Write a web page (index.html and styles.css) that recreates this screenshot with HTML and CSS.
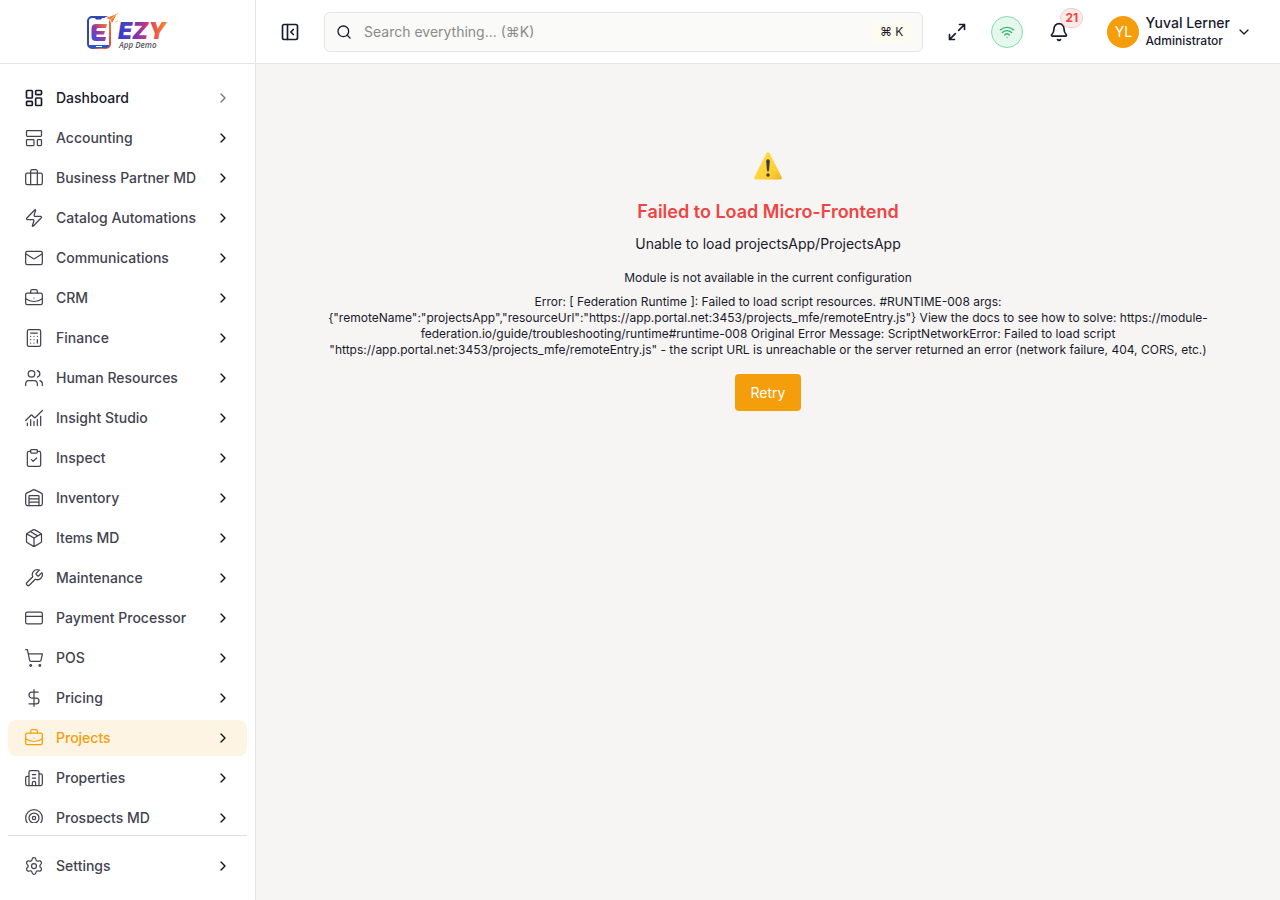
FILE: index.html
```html
<!DOCTYPE html>
<html lang="en">
  <head>
    <meta charset="utf-8" />
    <meta name="viewport" content="width=device-width, initial-scale=1.0" />
    <title>EZY App Demo</title>
    <link rel="stylesheet" href="styles.css">
  </head>
  <body>
    <!-- icon shapes shared by the menu -->
    <svg class="sprite" aria-hidden="true">
      <symbol id="chevron" viewBox="0 0 24 24"><path d="m9 18 6-6-6-6" /></symbol>
      <symbol id="briefcase" viewBox="0 0 24 24">
        <path d="M12 12h.01M16 6V4a2 2 0 0 0-2-2h-4a2 2 0 0 0-2 2v2M22 13a18.15 18.15 0 0 1-20 0" />
        <rect width="20" height="14" x="2" y="6" rx="2" />
      </symbol>
    </svg>

    <div class="wrap">
      <aside class="sidebar">
        <a class="logo" href="#home" aria-label="EZY App Demo">
          <svg width="84" height="40" viewBox="0 0 84 40">
            <defs>
              <linearGradient id="phone" x1="0" y1="0.2" x2="1" y2="0.8">
                <stop offset="0" stop-color="#2547b8" />
                <stop offset="0.45" stop-color="#4b45b5" />
                <stop offset="0.8" stop-color="#f4713a" />
                <stop offset="1" stop-color="#e2483f" />
              </linearGradient>
              <linearGradient id="letter" x1="0" y1="1" x2="1" y2="0">
                <stop offset="0" stop-color="#2458e0" />
                <stop offset="0.5" stop-color="#9a35a8" />
                <stop offset="1" stop-color="#ff7a2a" />
              </linearGradient>
              <linearGradient id="word" x1="0" y1="0" x2="1" y2="0">
                <stop offset="0" stop-color="#2c45c9" />
                <stop offset="0.35" stop-color="#7634b4" />
                <stop offset="0.6" stop-color="#d93a6c" />
                <stop offset="1" stop-color="#ff9418" />
              </linearGradient>
            </defs>
            <rect x="2" y="5" width="22" height="31" rx="4" fill="#fff" stroke="url(#phone)" stroke-width="2" />
            <path d="M8 5h9l-2 2.500h-5z" fill="#2547b8" />
            <path d="M3 33h20v0q0 3-3 3H6q-3 0-3-3z" fill="#2c55c4" />
            <path d="M10 34.500h6" stroke="#fff" stroke-width="1" />
            <path d="M10 12h11l-1 4h-8q-1.500 0-1.500 1.500V19H19l-1 3.500h-7.500V25H20l-1 4h-9q-4.500 0-4.500-4.500v-8Q5.500 12 10 12z" fill="url(#letter)" />
            <path d="M19 6l13-5-6 11-2-4z" fill="#f47a2c" stroke="#fff" stroke-width="1" />
            <path d="M24 8l8-7M29 10l3-1" stroke="#fbc08c" stroke-width="1" />
            <text class="logo-name" x="32" y="27" fill="url(#word)">EZY</text>
            <text class="logo-sub" x="33" y="36">App Demo</text>
          </svg>
        </a>
        <nav class="menu">
          <ul class="nav-items">
            <li><a class="home" href="#dashboard">
              <svg class="icon" viewBox="0 0 24 24"><rect width="7" height="9" x="3" y="3" rx="1" /><rect width="7" height="5" x="14" y="3" rx="1" /><rect width="7" height="9" x="14" y="12" rx="1" /><rect width="7" height="5" x="3" y="16" rx="1" /></svg>
              <span>Dashboard</span><svg class="chevron"><use href="#chevron" /></svg></a></li>
            <li><a href="#accounting">
              <svg class="icon" viewBox="0 0 24 24"><rect width="18" height="7" x="3" y="3" rx="1" /><rect width="9" height="7" x="3" y="14" rx="1" /><rect width="5" height="7" x="16" y="14" rx="1" /></svg>
              <span>Accounting</span><svg class="chevron"><use href="#chevron" /></svg></a></li>
            <li><a href="#business-partner">
              <svg class="icon" viewBox="0 0 24 24"><path d="M16 20V4a2 2 0 0 0-2-2h-4a2 2 0 0 0-2 2v16" /><rect width="20" height="14" x="2" y="6" rx="2" /></svg>
              <span>Business Partner MD</span><svg class="chevron"><use href="#chevron" /></svg></a></li>
            <li><a href="#catalog">
              <svg class="icon" viewBox="0 0 24 24"><path d="M4 14a1 1 0 0 1-.78-1.63l9.9-10.2a.5.5 0 0 1 .86.46l-1.92 6.02A1 1 0 0 0 13 10h7a1 1 0 0 1 .78 1.63l-9.9 10.2a.5.5 0 0 1-.86-.46l1.92-6.02A1 1 0 0 0 11 14z" /></svg>
              <span>Catalog Automations</span><svg class="chevron"><use href="#chevron" /></svg></a></li>
            <li><a href="#communications">
              <svg class="icon" viewBox="0 0 24 24"><rect width="20" height="16" x="2" y="4" rx="2" /><path d="m22 7-8.97 5.7a1.94 1.94 0 0 1-2.06 0L2 7" /></svg>
              <span>Communications</span><svg class="chevron"><use href="#chevron" /></svg></a></li>
            <li><a href="#crm">
              <svg class="icon"><use href="#briefcase" /></svg>
              <span>CRM</span><svg class="chevron"><use href="#chevron" /></svg></a></li>
            <li><a href="#finance">
              <svg class="icon" viewBox="0 0 24 24"><rect width="16" height="20" x="4" y="2" rx="2" /><path d="M8 6h8M16 14v4M16 10h.01M12 10h.01M8 10h.01M12 14h.01M8 14h.01M12 18h.01M8 18h.01" /></svg>
              <span>Finance</span><svg class="chevron"><use href="#chevron" /></svg></a></li>
            <li><a href="#hr">
              <svg class="icon" viewBox="0 0 24 24"><path d="M16 21v-2a4 4 0 0 0-4-4H6a4 4 0 0 0-4 4v2M22 21v-2a4 4 0 0 0-3-3.87M16 3.13a4 4 0 0 1 0 7.75" /><circle cx="9" cy="7" r="4" /></svg>
              <span>Human Resources</span><svg class="chevron"><use href="#chevron" /></svg></a></li>
            <li><a href="#insight">
              <svg class="icon" viewBox="0 0 24 24"><path d="M12 16v5M16 14v7M20 10v11M4 18v3M8 14v7" /><path d="m22 3-8.646 8.646a.5.5 0 0 1-.708 0L9.354 8.354a.5.5 0 0 0-.707 0L2 15" /></svg>
              <span>Insight Studio</span><svg class="chevron"><use href="#chevron" /></svg></a></li>
            <li><a href="#inspect">
              <svg class="icon" viewBox="0 0 24 24"><rect width="8" height="4" x="8" y="2" rx="1" /><path d="M16 4h2a2 2 0 0 1 2 2v14a2 2 0 0 1-2 2H6a2 2 0 0 1-2-2V6a2 2 0 0 1 2-2h2M9 14l2 2 4-4" /></svg>
              <span>Inspect</span><svg class="chevron"><use href="#chevron" /></svg></a></li>
            <li><a href="#inventory">
              <svg class="icon" viewBox="0 0 24 24"><path d="M18 21V10a1 1 0 0 0-1-1H7a1 1 0 0 0-1 1v11M6 13h12M6 17h12" /><path d="M22 19a2 2 0 0 1-2 2H4a2 2 0 0 1-2-2V8a2 2 0 0 1 1.132-1.803l7.95-3.974a2 2 0 0 1 1.837 0l7.948 3.974A2 2 0 0 1 22 8z" /></svg>
              <span>Inventory</span><svg class="chevron"><use href="#chevron" /></svg></a></li>
            <li><a href="#items">
              <svg class="icon" viewBox="0 0 24 24"><path d="M11 21.73a2 2 0 0 0 2 0l7-4A2 2 0 0 0 21 16V8a2 2 0 0 0-1-1.73l-7-4a2 2 0 0 0-2 0l-7 4A2 2 0 0 0 3 8v8a2 2 0 0 0 1 1.73zM12 22V12" /><path d="M3.29 7 12 12l8.71-5M7.5 4.27l9 5.15" /></svg>
              <span>Items MD</span><svg class="chevron"><use href="#chevron" /></svg></a></li>
            <li><a href="#maintenance">
              <svg class="icon" viewBox="0 0 24 24"><path d="M14.7 6.3a1 1 0 0 0 0 1.4l1.6 1.6a1 1 0 0 0 1.4 0l3.77-3.77a6 6 0 0 1-7.94 7.94l-6.91 6.91a2.12 2.12 0 0 1-3-3l6.91-6.91a6 6 0 0 1 7.94-7.94l-3.76 3.76z" /></svg>
              <span>Maintenance</span><svg class="chevron"><use href="#chevron" /></svg></a></li>
            <li><a href="#payment">
              <svg class="icon" viewBox="0 0 24 24"><rect width="20" height="14" x="2" y="5" rx="2" /><path d="M2 10h20" /></svg>
              <span>Payment Processor</span><svg class="chevron"><use href="#chevron" /></svg></a></li>
            <li><a href="#pos">
              <svg class="icon" viewBox="0 0 24 24"><circle cx="8" cy="21" r="1" /><circle cx="19" cy="21" r="1" /><path d="M2.05 2.05h2l2.66 12.42a2 2 0 0 0 2 1.58h9.78a2 2 0 0 0 1.95-1.57l1.65-7.43H5.12" /></svg>
              <span>POS</span><svg class="chevron"><use href="#chevron" /></svg></a></li>
            <li><a href="#pricing">
              <svg class="icon" viewBox="0 0 24 24"><path d="M12 2v20M17 5H9.5a3.5 3.5 0 0 0 0 7h5a3.5 3.5 0 0 1 0 7H6" /></svg>
              <span>Pricing</span><svg class="chevron"><use href="#chevron" /></svg></a></li>
            <li><a class="active" href="#projects">
              <svg class="icon"><use href="#briefcase" /></svg>
              <span>Projects</span><svg class="chevron"><use href="#chevron" /></svg></a></li>
            <li><a href="#properties">
              <svg class="icon" viewBox="0 0 24 24"><path d="M10 12h4M10 8h4M14 21v-3a2 2 0 0 0-4 0v3M6 10H4a2 2 0 0 0-2 2v7a2 2 0 0 0 2 2h16a2 2 0 0 0 2-2V9a2 2 0 0 0-2-2h-2M6 21V5a2 2 0 0 1 2-2h8a2 2 0 0 1 2 2v16" /></svg>
              <span>Properties</span><svg class="chevron"><use href="#chevron" /></svg></a></li>
            <li><a href="#prospects">
              <svg class="icon" viewBox="0 0 24 24"><circle cx="12" cy="12" r="10" /><circle cx="12" cy="12" r="6" /><circle cx="12" cy="12" r="2" /></svg>
              <span>Prospects MD</span><svg class="chevron"><use href="#chevron" /></svg></a></li>
          </ul>
        </nav>
        <div class="nav-items nav-bottom">
          <a href="#settings">
            <svg class="icon" viewBox="0 0 24 24"><path d="M9.671 4.136a2.34 2.34 0 0 1 4.659 0 2.34 2.34 0 0 0 3.319 1.915 2.34 2.34 0 0 1 2.33 4.033 2.34 2.34 0 0 0 0 3.831 2.34 2.34 0 0 1-2.33 4.033 2.34 2.34 0 0 0-3.319 1.915 2.34 2.34 0 0 1-4.659 0 2.34 2.34 0 0 0-3.32-1.915 2.34 2.34 0 0 1-2.33-4.033 2.34 2.34 0 0 0 0-3.831A2.34 2.34 0 0 1 6.35 6.051a2.34 2.34 0 0 0 3.319-1.915" /><circle cx="12" cy="12" r="3" /></svg>
            <span>Settings</span><svg class="chevron"><use href="#chevron" /></svg></a>
        </div>
      </aside>

      <div class="page">
        <header class="topbar">
          <button class="icon-btn" type="button" aria-label="Collapse sidebar">
            <svg class="icon" viewBox="0 0 24 24"><rect width="18" height="18" x="3" y="3" rx="2" /><path d="M9 3v18M16 15l-3-3 3-3" /></svg>
          </button>
          <label class="search">
            <svg class="icon small" viewBox="0 0 24 24"><circle cx="11" cy="11" r="8" /><path d="m21 21-4.3-4.3" /></svg>
            <input type="search" aria-label="Search everything" placeholder="Search everything... (⌘K)" />
            <kbd>⌘ K</kbd>
          </label>
          <button class="icon-btn" type="button" aria-label="Full screen">
            <svg class="icon" viewBox="0 0 24 24"><path d="M15 3h6v6M21 3l-7 7M3 21l7-7M9 21H3v-6" /></svg>
          </button>
          <button class="icon-btn wifi" type="button" aria-label="Online">
            <svg class="icon small" viewBox="0 0 24 24"><path d="M12 20h.01M2 8.82a15 15 0 0 1 20 0M5 12.859a10 10 0 0 1 14 0M8.5 16.429a5 5 0 0 1 7 0" /></svg>
          </button>
          <button class="icon-btn bell" type="button" aria-label="Notifications">
            <svg class="icon" viewBox="0 0 24 24"><path d="M10.268 21a2 2 0 0 0 3.464 0M3.262 15.326A1 1 0 0 0 4 17h16a1 1 0 0 0 .74-1.673C19.41 13.956 18 12.499 18 8A6 6 0 0 0 6 8c0 4.499-1.411 5.956-2.738 7.326" /></svg>
            <span class="badge">21</span>
          </button>
          <button class="user" type="button">
            <span class="avatar">YL</span>
            <span class="user-text">
              <span class="user-name">Yuval Lerner</span>
              <span class="user-role">Administrator</span>
            </span>
            <svg class="icon small" viewBox="0 0 24 24"><path d="m6 9 6 6 6-6" /></svg>
          </button>
        </header>

        <main class="error">
          <svg class="warning" viewBox="0 0 28 28" role="img" aria-label="Warning">
            <defs>
              <linearGradient id="sign" x1="0" y1="0" x2="1" y2="1">
                <stop offset="0" stop-color="#ffdf4a" />
                <stop offset="0.7" stop-color="#fdd033" />
                <stop offset="1" stop-color="#f0b020" />
              </linearGradient>
            </defs>
            <path d="M12.4 1.3q1.6-2 3.2 0L27.6 25q.8 2.2-1.4 2.4H1.8Q-.4 27.2.4 25z" fill="url(#sign)" />
            <path d="M12.2 9.2q0-2 1.8-2t1.8 2l-.8 9.3q-.2 1.1-1 1.1t-1-1.1z" fill="#3b3c42" />
            <circle cx="14" cy="23" r="1.7" fill="#3b3c42" />
          </svg>
          <h1>Failed to Load Micro-Frontend</h1>
          <p class="lead">Unable to load projectsApp/ProjectsApp</p>
          <p>Module is not available in the current configuration</p>
          <p class="details">Error: [ Federation Runtime ]: Failed to load script resources. #RUNTIME-008 args: {"remoteName":"projectsApp","resourceUrl":"https://app.portal.net:3453/projects_mfe/remoteEntry.js"} View the docs to see how to solve: https://module-federation.io/guide/troubleshooting/runtime#runtime-008 Original Error Message: ScriptNetworkError: Failed to load script "https://app.portal.net:3453/projects_mfe/remoteEntry.js" - the script URL is unreachable or the server returned an error (network failure, 404, CORS, etc.)</p>
          <button class="retry" type="button">Retry</button>
        </main>
      </div>
    </div>
  </body>
</html>
```
FILE: styles.css
```css
/* Simple Reset CSS */
* {
  margin: 0;
  padding: 0;
  box-sizing: border-box;
}

html,
body {
  height: 100%;
}

body {
  font-family: Inter, 'Liberation Sans', sans-serif;
  font-size: 14px;
  line-height: 20px;
  color: #1a1a2e;
  background-color: #f6f5f3;
}

ul {
  list-style: none;
}

a {
  color: inherit;
  text-decoration: none;
}

button,
input,
kbd {
  font: inherit;
  color: inherit;
  border: 0;
  background: none;
}

button {
  cursor: pointer;
}

.sprite {
  display: none;
}

.icon,
.chevron {
  flex: none;
  width: 20px;
  height: 20px;
  fill: none;
  stroke: currentColor;
  stroke-width: 2;
  stroke-linecap: round;
  stroke-linejoin: round;
}

.small,
.chevron {
  width: 16px;
  height: 16px;
}

.wrap {
  display: flex;
  height: 100%;
}

/* Sidebar */
.sidebar {
  flex: none;
  display: flex;
  flex-direction: column;
  width: 256px;
  border-right: 1px solid #e5e5e5;
  background-color: #fff;
}

.logo {
  flex: none;
  display: flex;
  align-items: center;
  justify-content: center;
  height: 64px;
  border-bottom: 1px solid #e5e5e5;
}

.logo svg {
  overflow: visible;
}

.logo-name {
  font: italic 900 23px Inter, sans-serif;
}

.logo-sub {
  font: italic 600 8px 'Open Sans', sans-serif;
  fill: #55555c;
}

.menu {
  flex: 1;
  min-height: 0;
  margin: 16px 0 12px;
  overflow-y: auto;
  scrollbar-width: none;
}

.nav-items {
  display: flex;
  flex-direction: column;
  gap: 4px;
  padding: 0 8px;
}

.nav-items a {
  display: flex;
  align-items: center;
  gap: 12px;
  height: 36px;
  padding: 0 16px;
  border-radius: 8px;
  font-weight: 500;
  color: #43434f;
}

.nav-items a:hover {
  background-color: #f6f5f3;
}

.nav-items span {
  flex: 1;
  white-space: nowrap;
}

.nav-items .icon {
  stroke-width: 1.5;
}

.nav-items .chevron {
  color: #111;
}

.nav-items .home {
  color: #1a1a2e;
}

.nav-items .home .icon {
  stroke-width: 2;
}

.nav-items .home .chevron {
  color: #777;
}

.nav-items .active,
.nav-items .active:hover {
  color: #f59e0b;
  background-color: #fef4e4;
}

.nav-bottom {
  margin: 0 8px;
  padding: 12px 0 16px;
  border-top: 1px solid #e0e0e0;
}

/* Top bar */
.page {
  flex: 1;
  min-width: 0;
  display: flex;
  flex-direction: column;
}

.topbar {
  flex: none;
  display: flex;
  align-items: center;
  gap: 24px;
  height: 64px;
  padding: 0 16px 0 24px;
  border-bottom: 1px solid #e5e5e5;
  background-color: #fff;
}

.icon-btn {
  flex: none;
  display: flex;
  align-items: center;
  justify-content: center;
}

.search {
  flex: 1;
  min-width: 0;
  display: flex;
  align-items: center;
  gap: 12px;
  height: 40px;
  padding: 0 11px;
  border: 1px solid #e5e5e5;
  border-radius: 6px;
  background-color: #fafaf9;
}

.search input {
  flex: 1;
  min-width: 0;
  outline: none;
}

.search input::placeholder {
  color: #8a8a8a;
}

.search kbd {
  padding: 0 8px;
  border-radius: 4px;
  font-size: 12px;
  background-color: #fefbf0;
}

.wifi {
  width: 32px;
  height: 32px;
  border: 1px solid #86dcae;
  border-radius: 50%;
  color: #2fb968;
  background-color: #e6f8ed;
}

.bell {
  position: relative;
  width: 24px;
  height: 24px;
}

.badge {
  position: absolute;
  top: -12px;
  left: 13px;
  padding: 0 4px;
  border: 1px solid #fbcaca;
  border-radius: 10px;
  font-size: 12px;
  font-weight: 700;
  line-height: 18px;
  color: #ef4444;
  background-color: #fdebea;
}

.user {
  flex: none;
  display: flex;
  align-items: center;
  gap: 6px;
  padding: 0 12px;
  text-align: left;
}

.avatar {
  width: 32px;
  height: 32px;
  border-radius: 50%;
  line-height: 32px;
  text-align: center;
  color: #fff;
  background-color: #f59e0b;
}

.user-text {
  display: flex;
  flex-direction: column;
  padding-top: 1px;
  font-weight: 500;
}

.user-name {
  line-height: 18px;
}

.user-role {
  font-size: 12px;
  line-height: 18px;
}

/* Error message */
.error {
  flex: 1;
  display: flex;
  flex-direction: column;
  align-items: center;
  padding: 88px 64px 32px;
  font-size: 12px;
  line-height: 16px;
  text-align: center;
}

.warning {
  width: 28px;
  height: 28px;
  margin-bottom: 18px;
}

.error h1 {
  margin-bottom: 8px;
  font-size: 18px;
  font-weight: 600;
  line-height: 28px;
  color: #ef4444;
}

.error .lead {
  margin-bottom: 16px;
  font-size: 14px;
  line-height: 20px;
}

.details {
  margin: 8px 0 16px;
}

.retry {
  padding: 8px 16px;
  border-radius: 4px;
  font-size: 14px;
  line-height: 21px;
  color: #fff;
  background-color: #f59e0b;
}

.retry:hover {
  background-color: #e08e05;
}
```
